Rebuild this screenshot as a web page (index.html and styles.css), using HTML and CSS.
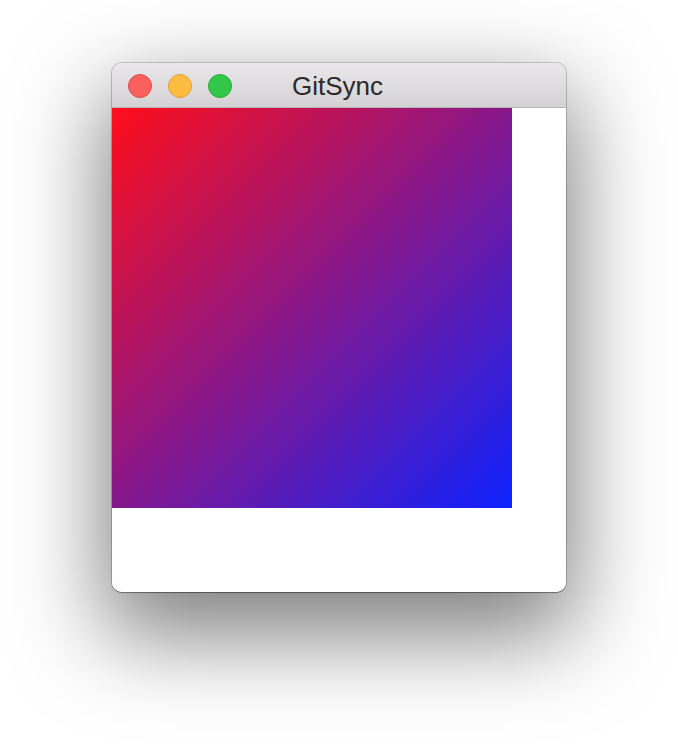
FILE: index.html
```html
<!DOCTYPE html>
<html>
<head>
<meta charset="utf-8">
<link rel="stylesheet" href="styles.css">
</head>
<body>
<div class="stage">
  <div class="window">
    <div class="titlebar">
      <div class="lights">
        <span class="light red"></span>
        <span class="light yellow"></span>
        <span class="light green"></span>
      </div>
      <div class="title">GitSync</div>
    </div>
    <div class="content">
      <div class="square"></div>
    </div>
  </div>
</div>
</body>
</html>
```
FILE: styles.css
```css
html, body {
  margin: 0;
  padding: 0;
  background: #ffffff;
}
.stage {
  width: 678px;
  height: 752px;
  display: flex;
  justify-content: center;
  align-items: flex-start;
  padding-top: 63px;
  box-sizing: border-box;
  overflow: hidden;
}
.window {
  width: 454px;
  height: 529px;
  border-radius: 10px;
  overflow: hidden;
  background: #ffffff;
  display: flex;
  flex-direction: column;
  box-shadow: 0 0 0 1px rgba(0,0,0,0.18), 0 1px 1px rgba(0,0,0,0.3), 0 36px 90px 8px rgba(0,0,0,0.5);
}
.titlebar {
  position: relative;
  height: 44px;
  flex: none;
  background: linear-gradient(#e9e7e9, #d3d1d3);
  border-bottom: 1px solid #b4b4b4;
  display: flex;
  align-items: center;
  justify-content: center;
}
.lights {
  position: absolute;
  left: 16px;
  top: 11px;
  display: flex;
  gap: 16px;
}
.light {
  width: 24px;
  height: 24px;
  border-radius: 50%;
  box-sizing: border-box;
}
.red { background: #fc605c; border: 1px solid #de4a45; }
.yellow { background: #fdbc40; border: 1px solid #dea034; }
.green { background: #34c84a; border: 1px solid #27aa35; }
.title {
  font-family: "Liberation Sans", Arial, sans-serif;
  font-size: 26px;
  color: #2a2a2a;
  margin-left: -3px;
  margin-top: 2px;
}
.content {
  flex: 1;
  background: #ffffff;
}
.square {
  width: 400px;
  height: 400px;
  background: linear-gradient(135deg, #ff0e1a, #0d22ff);
}
```
